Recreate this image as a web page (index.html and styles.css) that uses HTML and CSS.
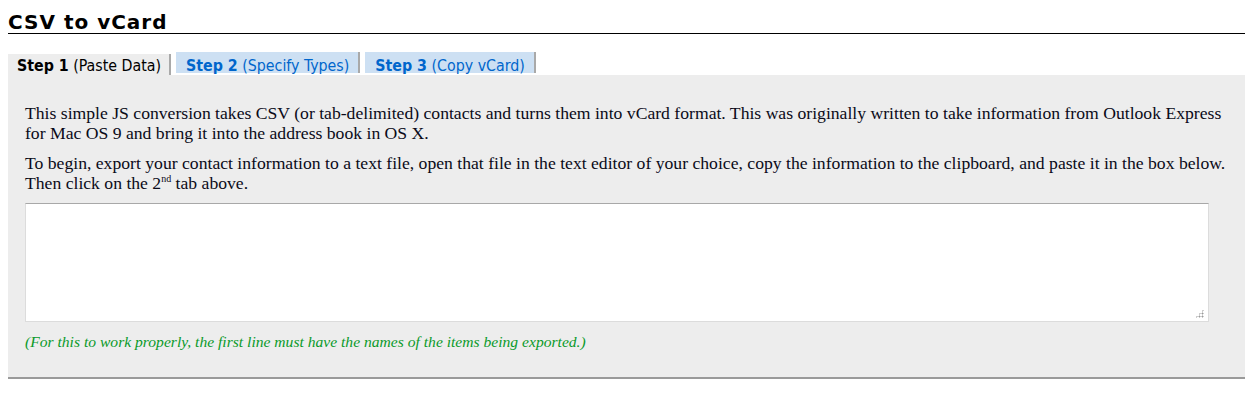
FILE: index.html
```
<!DOCTYPE html>
<html>
<head>
<meta charset="utf-8">
<link rel="stylesheet" href="styles.css">
</head>
<body>
<h1 class="title">CSV to vCard</h1>
<div class="tabs">
  <div class="tab tab-active"><b>Step 1</b> (Paste Data)</div>
  <div class="tab"><b>Step 2</b> (Specify Types)</div>
  <div class="tab"><b>Step 3</b> (Copy vCard)</div>
</div>
<div class="panel">
  <p class="text">This simple JS conversion takes CSV (or tab-delimited) contacts and turns them into vCard format. This was originally written to take information from Outlook Express for Mac OS 9 and bring it into the address book in OS X.</p>
  <p class="text">To begin, export your contact information to a text file, open that file in the text editor of your choice, copy the information to the clipboard, and paste it in the box below. Then click on the 2<sup>nd</sup> tab above.</p>
  <div class="input-wrap">
    <textarea class="input"></textarea>
    <span class="grip"></span>
  </div>
  <p class="note">(For this to work properly, the first line must have the names of the items being exported.)</p>
</div>
</body>
</html>
```

FILE: styles.css
```
html, body { background: #fff; }
body {
  margin: 8px 0 0 8px;
  color: #000;
}
.title {
  font-family: "DejaVu Sans", Verdana, sans-serif;
  font-weight: bold;
  font-size: 20px;
  letter-spacing: 1px;
  line-height: 22px;
  margin: 0;
  padding-top: 3px;
  border-bottom: 1px solid #000;
}
.tabs {
  display: flex;
  align-items: flex-end;
  margin-top: 18px;
  font-family: "DejaVu Sans Condensed", "DejaVu Sans", Tahoma, sans-serif;
  font-stretch: condensed;
  font-size: 15.8px;
}
.tab {
  box-sizing: border-box;
  background: #cde0f3;
  color: #0066cc;
  height: 21px;
  line-height: 19px;
  padding: 4px 9px 0 10px;
  border-right: 2px solid #a9a9a9;
  margin-right: 5px;
  margin-bottom: 2px;
  white-space: nowrap;
}
.tab b { font-weight: bold; }
.tab-active {
  background: #ededed;
  color: #000;
  padding-top: 2px;
  padding-left: 9px;
  padding-right: 8px;
  margin-bottom: 0;
}
.panel {
  background: #ededed;
  padding: 28px 12px 25px 17px;
  border-bottom: 2px solid #9a9a9a;
}
.text {
  font-family: "Liberation Serif", "Palatino Linotype", serif;
  font-size: 17.65px;
  line-height: 20px;
  margin: 0 0 10px 0;
  color: #0a0a18;
}
.text sup { font-size: 10px; line-height: 0; }
.input-wrap {
  position: relative;
  width: 1184px;
  margin-top: 2px;
}
.input {
  display: block;
  box-sizing: border-box;
  width: 1184px;
  height: 119px;
  margin: 0;
  background: #fff;
  border: 1px solid #dcdcdc;
  border-top-color: #a8a8a8;
  resize: none;
}
.grip {
  position: absolute;
  right: 5px;
  bottom: 4px;
  width: 9px;
  height: 9px;
  background-image: radial-gradient(circle, #9a9a9a 0.9px, transparent 1.1px);
  background-size: 3px 3px;
  clip-path: polygon(100% 0, 100% 100%, 0 100%);
}
.note {
  font-family: "Liberation Serif", "Palatino Linotype", serif;
  font-style: italic;
  font-size: 15.6px;
  color: #0a9a2a;
  margin: 10px 0 0 0;
  line-height: 20px;
}
```
